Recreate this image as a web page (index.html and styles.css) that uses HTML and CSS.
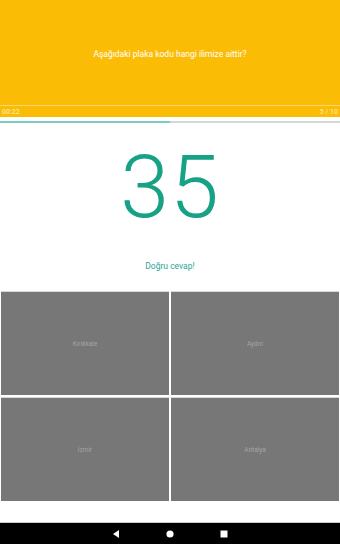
FILE: index.html
```html
<!DOCTYPE html>
<html>
<head>
    <title>Plaka Quiz</title>
    <link rel="stylesheet" href="styles.css">
</head>
<body>
    <div class="screen">
        <div class="header">
            <div class="question">Aşağıdaki plaka kodu hangi ilimize aittir?</div>
            <div class="meta">
                <span>00:22</span>
                <span>5 / 10</span>
            </div>
        </div>
        <div class="progress"><div class="progress-fill" style="width: 50%"></div></div>

        <div class="plate">35</div>
        <div class="result">Doğru cevap!</div>

        <div class="answers">
            <div class="answer">Kırıkkale</div>
            <div class="answer">Aydın</div>
            <div class="answer">İzmir</div>
            <div class="answer">Antalya</div>
        </div>

        <div class="spacer"></div>

        <div class="navbar">
            <svg width="10" height="10" viewBox="0 0 10 10"><polygon points="8,1 8,9 2,5" fill="#fff"/></svg>
            <svg width="10" height="10" viewBox="0 0 10 10"><circle cx="5" cy="5" r="3.6" fill="#fff"/></svg>
            <svg width="10" height="10" viewBox="0 0 10 10"><rect x="1.5" y="1.5" width="7" height="7" fill="#fff"/></svg>
        </div>
    </div>
</body>
</html>
```

FILE: styles.css
```css
body { margin: 0; font-family: Roboto, "Noto Sans", sans-serif; background: #fff; }
.screen { width: 340px; height: 544px; display: flex; flex-direction: column; }
.header { background: #fbbc05; height: 117px; display: flex; flex-direction: column; }
.question { flex: 1; display: flex; align-items: center; justify-content: center; color: #fff; font-size: 8.5px; padding-top: 2px; border-bottom: 1px solid #fdd568; }
.meta { height: 11px; display: flex; justify-content: space-between; align-items: center; padding: 0 2px; color: #fde6a0; font-size: 7px; font-weight: 500; }
.progress { margin-top: 4px; height: 2px; background: #d6d6d6; }
.progress-fill { height: 100%; background: #80cbc4; }
.plate { text-align: center; color: #17a185; font-size: 88px; font-weight: 300; line-height: 1; margin-top: 20px; height: 104px; letter-spacing: 1px; }
.result { text-align: center; color: #2aa695; font-size: 8.5px; line-height: 1; height: 44px; padding-top: 15px; box-sizing: border-box; }
.answers { display: grid; grid-template-columns: 1fr 1fr; grid-template-rows: 104px 104px; gap: 2px; padding: 0 1px; }
.answer { background: #777; border-top: 1px solid #d8d8d8; display: flex; align-items: center; justify-content: center; color: #a4a4a4; font-size: 6.5px; }
.spacer { flex: 1; border-bottom: 1px solid #ccc; }
.navbar { height: 21px; background: #000; display: flex; justify-content: center; align-items: center; gap: 44px; }
```
